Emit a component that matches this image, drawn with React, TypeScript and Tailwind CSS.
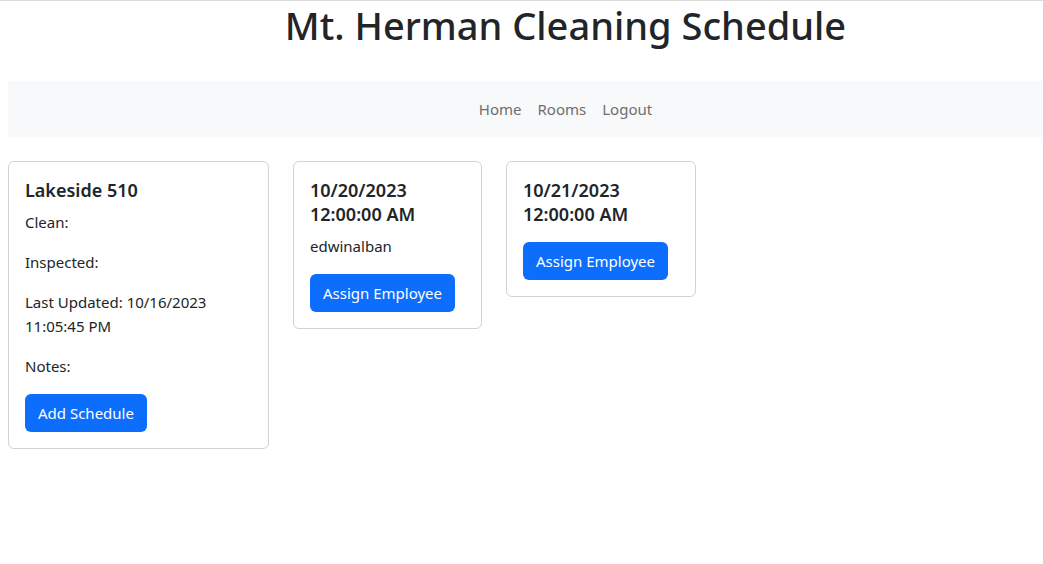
export default function App() {
  return (
    <div className="min-h-[564px] w-full border-t border-[#dcdcdc] bg-white font-['Noto_Sans',sans-serif] text-[15px] leading-6 text-[#212529]">
      <h1 className="pl-[88px] text-center text-[38px] leading-[48px] font-medium">Mt. Herman Cleaning Schedule</h1>
      <nav className="mt-8 ml-2 flex h-14 items-center justify-center bg-[#f8f9fa] pl-[80px]">
        <a className="px-2 text-[#6c6e70]" href="#">Home</a>
        <a className="px-2 text-[#6c6e70]" href="#">Rooms</a>
        <a className="px-2 text-[#6c6e70]" href="#">Logout</a>
      </nav>
      <div className="mt-6 ml-2 flex items-start gap-6">
        <div className="w-[261px] rounded-md border border-[#d3d3d3] p-4">
          <h5 className="mb-2 text-[18px] leading-6 font-semibold">Lakeside 510</h5>
          <p className="mb-4">Clean:</p>
          <p className="mb-4">Inspected:</p>
          <p className="mb-4">Last Updated: 10/16/2023 11:05:45 PM</p>
          <p className="mb-4">Notes:</p>
          <button className="h-[38px] rounded-md bg-[#0d6efd] px-[13px] text-white">Add Schedule</button>
        </div>
        <div className="w-[189px] rounded-md border border-[#d3d3d3] p-4">
          <h5 className="mb-2 text-[18px] leading-6 font-semibold">10/20/2023 12:00:00 AM</h5>
          <p className="mb-4">edwinalban</p>
          <button className="h-[38px] rounded-md bg-[#0d6efd] px-[13px] text-white">Assign Employee</button>
        </div>
        <div className="w-[190px] rounded-md border border-[#d3d3d3] p-4">
          <h5 className="mb-4 text-[18px] leading-6 font-semibold">10/21/2023 12:00:00 AM</h5>
          <button className="h-[38px] rounded-md bg-[#0d6efd] px-[13px] text-white">Assign Employee</button>
        </div>
      </div>
    </div>
  );
}
